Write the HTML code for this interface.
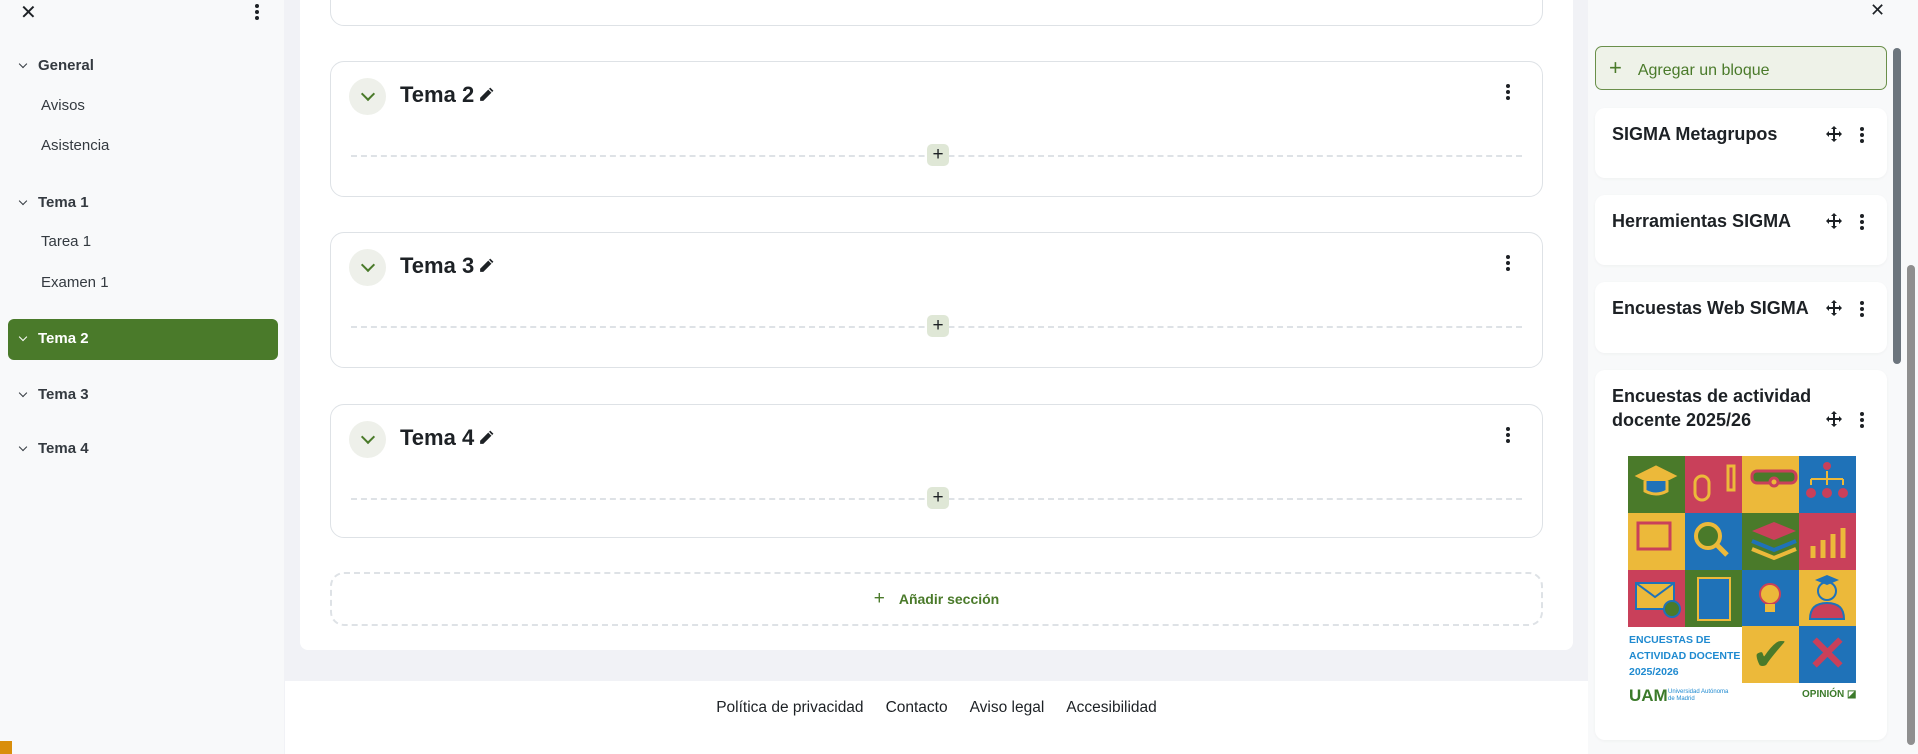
<!DOCTYPE html>
<html><head><meta charset="utf-8"><style>
*{box-sizing:border-box;margin:0;padding:0}
body{width:1918px;height:754px;overflow:hidden;background:#f1f2f6;font-family:"Liberation Sans",sans-serif;color:#1d2125;position:relative}
.abs{position:absolute}
#left{left:0;top:0;width:284px;height:754px;background:#f8f9fa}
.nav{position:absolute;font-size:15px;color:#343a40}
.nav.h{font-weight:bold;left:38px}
.nav.i{left:41px}
.chev{position:absolute;left:20px;width:6px;height:6px;border-right:1.5px solid #343a40;border-bottom:1.5px solid #343a40;transform:rotate(45deg)}
#main{left:300px;top:0;width:1273px;height:650px;background:#fff;border-radius:0 0 8px 8px}
.sec{position:absolute;left:330px;width:1213px;border:1px solid #dee2e6;border-radius:14px;background:#fff}
.circ{position:absolute;left:18px;top:16px;width:37px;height:37px;border-radius:50%;background:#eef0ea}
.circ:after{content:"";position:absolute;left:14px;top:11px;width:8px;height:8px;border-right:2px solid #4a7a2a;border-bottom:2px solid #4a7a2a;transform:rotate(45deg)}
.st{position:absolute;left:69px;top:20px;font-size:22px;font-weight:bold}
.st svg{vertical-align:-1px;margin-left:4px}
.dash{position:absolute;left:20px;right:20px;top:93px;border-top:2px dashed #dee2e6}
.plus{position:absolute;left:596px;top:82px;width:22px;height:22px;background:#dfe7d6;border-radius:5px;text-align:center;line-height:21px;font-size:19px;color:#1d2125}
.keb{position:absolute;right:32px;top:22px;width:4px}
.keb i{display:block;width:4px;height:4px;border-radius:50%;background:#1d2125;margin-bottom:2px}
#right{left:1588px;top:0;width:330px;height:754px;background:#f8f9fa}
.blk{position:absolute;left:1595px;width:292px;background:#fff;border-radius:10px;box-shadow:0 1px 3px rgba(0,0,0,.04)}
.bt{position:absolute;left:17px;top:14px;font-size:18px;font-weight:bold;line-height:24px}
.mv{position:absolute;left:231px}
.bk{position:absolute;left:265px}
.grid div{position:absolute;width:57px;height:57px}
</style></head><body>
<svg width="0" height="0" style="position:absolute"><defs>
<symbol id="pen" viewBox="0 0 16 16"><path d="M11.5 1.5l3 3L5 14H2v-3z" fill="#1d2125"/><path d="M10 3l3 3" stroke="#fff" stroke-width="1"/></symbol>
<symbol id="move" viewBox="0 0 16 16"><path d="M8 0l3 3H9v4h4V5l3 3-3 3V9H9v4h2l-3 3-3-3h2V9H3v2L0 8l3-3v2h4V3H5z" fill="#1d2125"/></symbol>
</defs></svg>
<div id="left" class="abs">
 <div class="abs" style="left:20px;top:0;font-size:20px">✕</div>
 <div class="keb" style="left:255px;top:4px;right:auto"><i></i><i></i><i></i></div>
 <div class="chev" style="top:61px"></div><div class="nav h" style="top:57px">General</div>
 <div class="nav i" style="top:97px">Avisos</div>
 <div class="nav i" style="top:137px">Asistencia</div>
 <div class="chev" style="top:198px"></div><div class="nav h" style="top:194px">Tema 1</div>
 <div class="nav i" style="top:233px">Tarea 1</div>
 <div class="nav i" style="top:274px">Examen 1</div>
 <div class="abs" style="left:8px;top:319px;width:270px;height:41px;background:#4a7a2a;border-radius:6px"></div>
 <div class="chev" style="top:334px;border-color:#fff"></div><div class="nav h" style="top:330px;color:#fff">Tema 2</div>
 <div class="chev" style="top:390px"></div><div class="nav h" style="top:386px">Tema 3</div>
 <div class="chev" style="top:444px"></div><div class="nav h" style="top:440px">Tema 4</div>
</div>
<div class="abs" style="left:0;top:741px;width:12px;height:13px;background:#d98e0b"></div>
<div id="main" class="abs"></div>
<div class="sec" style="top:-20px;height:46px"></div>
<div class="sec" style="top:61px;height:136px"><div class="circ"></div><div class="st">Tema 2<svg width="17" height="17"><use href="#pen"/></svg></div><div class="keb"><i></i><i></i><i></i></div><div class="dash"></div><div class="plus">+</div></div>
<div class="sec" style="top:232px;height:136px"><div class="circ"></div><div class="st">Tema 3<svg width="17" height="17"><use href="#pen"/></svg></div><div class="keb"><i></i><i></i><i></i></div><div class="dash"></div><div class="plus">+</div></div>
<div class="sec" style="top:404px;height:134px"><div class="circ"></div><div class="st">Tema 4<svg width="17" height="17"><use href="#pen"/></svg></div><div class="keb"><i></i><i></i><i></i></div><div class="dash"></div><div class="plus">+</div></div>
<div class="abs" style="left:330px;top:572px;width:1213px;height:54px;border:2px dashed #dee2e6;border-radius:14px;text-align:center;line-height:50px;color:#4a7a2a;font-weight:bold;font-size:14px"><span style="font-size:19px;font-weight:normal;margin-right:14px">+</span>Añadir sección</div>
<div class="abs" style="left:285px;top:681px;width:1303px;height:73px;background:#fff"></div>
<div class="abs" style="left:285px;top:699px;width:1303px;text-align:center;font-size:15.5px"><span style="margin:0 11px">Política de privacidad</span><span style="margin:0 11px">Contacto</span><span style="margin:0 11px">Aviso legal</span><span style="margin:0 11px">Accesibilidad</span></div>
<div id="right" class="abs"></div>
<div class="abs" style="left:1870px;top:0;font-size:18px">✕</div>
<div class="abs" style="left:1595px;top:46px;width:292px;height:44px;border:1px solid #6a8f4a;border-radius:7px;background:#eef2e8;color:#4a7a2a;font-size:16px;line-height:42px;padding-left:13px"><span style="font-size:22px;margin-right:16px">+</span>Agregar un bloque</div>
<div class="blk" style="top:108px;height:70px"><div class="bt">SIGMA Metagrupos</div><svg class="mv" style="top:18px" width="16" height="16"><use href="#move"/></svg><div class="keb bk" style="top:19px"><i></i><i></i><i></i></div></div>
<div class="blk" style="top:195px;height:70px"><div class="bt">Herramientas SIGMA</div><svg class="mv" style="top:18px" width="16" height="16"><use href="#move"/></svg><div class="keb bk" style="top:19px"><i></i><i></i><i></i></div></div>
<div class="blk" style="top:282px;height:71px"><div class="bt">Encuestas Web SIGMA</div><svg class="mv" style="top:18px" width="16" height="16"><use href="#move"/></svg><div class="keb bk" style="top:19px"><i></i><i></i><i></i></div></div>
<div class="blk" style="top:370px;height:370px"><div class="bt" style="top:14px">Encuestas de actividad<br>docente 2025/26</div><svg class="mv" style="top:41px" width="16" height="16"><use href="#move"/></svg><div class="keb bk" style="top:42px"><i></i><i></i><i></i></div></div>
<div class="grid">
<div style="left:1628px;top:456px;background:#4a7a2a"></div><div style="left:1685px;top:456px;background:#c9405a"></div><div style="left:1742px;top:456px;background:#ecb93a"></div><div style="left:1799px;top:456px;background:#1f72b8"></div>
<div style="left:1628px;top:513px;background:#ecb93a"></div><div style="left:1685px;top:513px;background:#1f72b8"></div><div style="left:1742px;top:513px;background:#4a7a2a"></div><div style="left:1799px;top:513px;background:#c9405a"></div>
<div style="left:1628px;top:570px;background:#c9405a"></div><div style="left:1685px;top:570px;background:#4a7a2a"></div><div style="left:1742px;top:570px;background:#1f72b8"></div><div style="left:1799px;top:570px;background:#ecb93a"></div>
<div style="left:1742px;top:626px;background:#ecb93a;color:#4a7a2a;font-size:46px;text-align:center;line-height:57px">✔</div><div style="left:1799px;top:626px;background:#1f72b8;color:#c9405a;font-size:48px;text-align:center;line-height:57px;font-weight:bold">✕</div>
</div>
<svg class="abs" style="left:1628px;top:456px" width="228" height="171" viewBox="0 0 228 171">
<g fill="none" stroke-width="3">
<path d="M10 20l18-9 18 9-18 9z" fill="#ecb93a" stroke="#ecb93a"/><path d="M17 25v10q11 6 22 0V25" fill="#1f72b8" stroke="#ecb93a"/>
<rect x="67" y="20" width="14" height="24" rx="7" stroke="#ecb93a"/><rect x="100" y="10" width="6" height="24" stroke="#ecb93a"/>
<rect x="124" y="15" width="44" height="12" rx="5" fill="#4a7a2a" stroke="#c9405a"/><circle cx="146" cy="26" r="4" fill="#ecb93a" stroke="#c9405a"/>
<circle cx="199" cy="10" r="4" fill="#c9405a" stroke="none"/><path d="M199 15v8M183 23h32M183 23v6M199 23v6M215 23v6" stroke="#ecb93a" stroke-width="2"/><circle cx="183" cy="37" r="5" fill="#c9405a" stroke="none"/><circle cx="199" cy="37" r="5" fill="#c9405a" stroke="none"/><circle cx="215" cy="37" r="5" fill="#c9405a" stroke="none"/>
<rect x="10" y="67" width="32" height="26" stroke="#c9405a"/><circle cx="80" cy="80" r="12" fill="#4a7a2a" stroke="#ecb93a" stroke-width="4"/><path d="M89 89l10 10" stroke="#ecb93a" stroke-width="5"/>
<path d="M124 75l22-9 22 9-22 9z" fill="#c9405a" stroke="none"/><path d="M124 85l22 9 22-9" stroke="#1f72b8" stroke-width="4"/><path d="M124 93l22 9 22-9" stroke="#ecb93a" stroke-width="4"/>
<path d="M185 102v-12M195 102v-18M205 102v-24M215 102v-30" stroke="#ecb93a" stroke-width="5"/>
<rect x="8" y="127" width="38" height="26" fill="#ecb93a" stroke="#1f72b8" stroke-width="2"/><path d="M8 127l19 14 19-14" stroke="#1f72b8" stroke-width="2"/><circle cx="44" cy="153" r="8" fill="#4a7a2a" stroke="#1f72b8" stroke-width="2"/>
<rect x="70" y="122" width="32" height="42" fill="#1f72b8" stroke="#ecb93a" stroke-width="2"/>
<circle cx="142" cy="138" r="10" fill="#ecb93a" stroke="#c9405a" stroke-width="2"/><rect x="137" y="148" width="10" height="8" fill="#ecb93a" stroke="none"/>
<circle cx="199" cy="135" r="9" fill="#ecb93a" stroke="#1f72b8" stroke-width="2"/><path d="M182 163q0-16 17-16t17 16z" fill="#c9405a" stroke="#1f72b8" stroke-width="2"/><path d="M187 124l12-5 12 5-12 5z" fill="#1f72b8" stroke="none"/>
</g></svg>
<div class="abs" style="left:1629px;top:632px;font-size:10.5px;font-weight:bold;color:#1f8ad0;line-height:16px">ENCUESTAS DE<br>ACTIVIDAD DOCENTE<br>2025/2026</div>
<div class="abs" style="left:1629px;top:686px;font-size:17px;font-weight:bold;color:#3b7a2a">UAM</div>
<div class="abs" style="left:1668px;top:689px;font-size:6px;color:#1f8ad0;line-height:7px">Universidad Autónoma<br>de Madrid</div>
<div class="abs" style="left:1802px;top:689px;font-size:10px;font-weight:bold;color:#3b7a2a">OPINIÓN ◪</div>
<div class="abs" style="left:1893px;top:48px;width:8px;height:316px;background:#6c757d;border-radius:4px"></div>
<div class="abs" style="left:1907px;top:265px;width:8px;height:480px;background:#8f8f8f;border-radius:4px"></div>
</body></html>
